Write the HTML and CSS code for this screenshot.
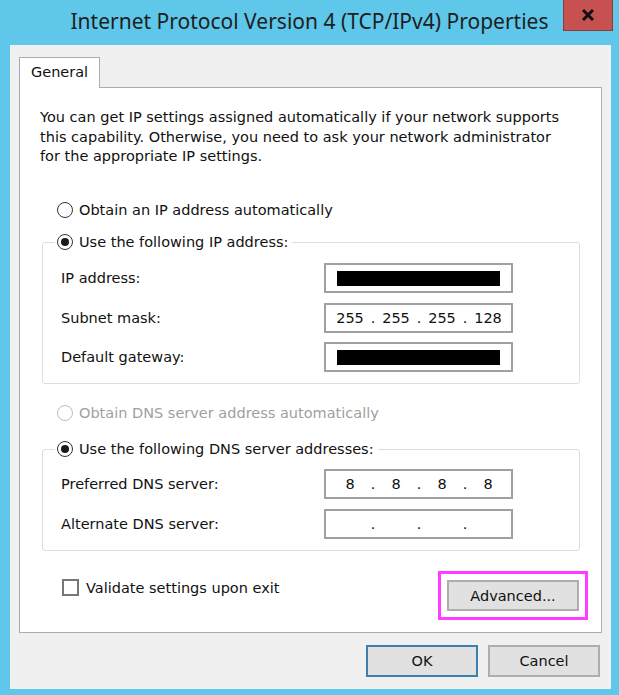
FILE: index.html
```html
<!DOCTYPE html>
<html lang="en">
<head>
<meta charset="utf-8">
<title>Internet Protocol Version 4 (TCP/IPv4) Properties</title>
<link rel="stylesheet" href="styles.css">
</head>
<body>
<div class="window">
  <header class="titlebar">
    <span class="spacer"></span>
    <h1 class="title">Internet Protocol Version 4 (TCP/IPv4) Properties</h1>
    <div class="close-wrap">
      <div class="close">
        <svg width="14" height="12" viewBox="0 0 14 12"><path d="M2 1 L12 11 M12 1 L2 11" stroke="#111" stroke-width="3" stroke-linecap="butt" fill="none"/></svg>
      </div>
    </div>
  </header>
  <div class="dialog">
    <div class="tabs"><div class="tab">General</div></div>
    <div class="panel">
      <p class="intro">You can get IP settings assigned automatically if your network supports<br>this capability. Otherwise, you need to ask your network administrator<br>for the appropriate IP settings.</p>

      <div class="radio-row first-radio">
        <span class="radio"></span><span>Obtain an IP address automatically</span>
      </div>

      <fieldset class="group group-ip">
        <legend class="legend"><span class="radio checked"></span><span>Use the following IP address:</span></legend>
        <div class="fields">
          <span class="label">IP address:</span>
          <div class="ipbox"><span class="redact"></span></div>
          <span class="label">Subnet mask:</span>
          <div class="ipbox">
            <span class="seg">255</span><span class="dot">.</span><span class="seg">255</span><span class="dot">.</span><span class="seg">255</span><span class="dot">.</span><span class="seg">128</span>
          </div>
          <span class="label">Default gateway:</span>
          <div class="ipbox"><span class="redact"></span></div>
        </div>
      </fieldset>

      <div class="radio-row disabled dns-auto">
        <span class="radio"></span><span>Obtain DNS server address automatically</span>
      </div>

      <fieldset class="group group-dns">
        <legend class="legend"><span class="radio checked"></span><span>Use the following DNS server addresses:</span></legend>
        <div class="fields dns-fields">
          <span class="label">Preferred DNS server:</span>
          <div class="ipbox">
            <span class="seg">8</span><span class="dot">.</span><span class="seg">8</span><span class="dot">.</span><span class="seg">8</span><span class="dot">.</span><span class="seg">8</span>
          </div>
          <span class="label">Alternate DNS server:</span>
          <div class="ipbox">
            <span class="seg"></span><span class="dot">.</span><span class="seg"></span><span class="dot">.</span><span class="seg"></span><span class="dot">.</span><span class="seg"></span>
          </div>
        </div>
      </fieldset>

      <div class="footer">
        <div class="check-row"><span class="checkbox"></span><span>Validate settings upon exit</span></div>
        <div class="highlight"><button class="btn btn-advanced">Advanced...</button></div>
      </div>
    </div>
    <div class="actions">
      <button class="btn btn-default">OK</button>
      <button class="btn">Cancel</button>
    </div>
  </div>
</div>
</body>
</html>
```

FILE: styles.css
```css
* { box-sizing: border-box; }

html, body {
  margin: 0;
  padding: 0;
}

body {
  width: 619px;
  height: 695px;
  background: #5fc7e9;
  font-family: "DejaVu Sans", sans-serif;
  font-size: 14.5px;
  color: #111;
  overflow: hidden;
}

.window {
  display: flex;
  flex-direction: column;
  height: 695px;
}

.titlebar {
  height: 45px;
  display: grid;
  grid-template-columns: 1fr auto 1fr;
  align-items: start;
}

.title {
  margin: 0;
  padding-top: 5px;
  font-family: "Noto Sans", "Open Sans", sans-serif;
  font-weight: normal;
  font-size: 21px;
  line-height: 32px;
  color: #1e1e1e;
  white-space: nowrap;
}

.close-wrap {
  display: flex;
  justify-content: flex-end;
  padding-right: 6px;
}

.close {
  width: 50px;
  height: 31px;
  background: #c75050;
  border: 1px solid #8c3a3a;
  border-top: none;
  display: flex;
  align-items: center;
  justify-content: center;
}

.dialog {
  margin: 0 8px 0 10px;
  height: 644px;
  background: #f0f0f0;
  padding: 12px 9px 0 9px;
  display: flex;
  flex-direction: column;
}

.tabs {
  display: flex;
  height: 30px;
}

.tab {
  position: relative;
  z-index: 1;
  width: 81px;
  height: 31px;
  background: #fff;
  border: 1px solid #adadad;
  border-bottom: none;
  padding-left: 11px;
  line-height: 28px;
}

.panel {
  background: #fff;
  border: 1px solid #adadad;
  height: 546px;
  padding: 20px 13px 12px 20px;
  display: flex;
  flex-direction: column;
}

.intro {
  margin: 0;
  line-height: 19.5px;
  white-space: nowrap;
}

.radio-row {
  display: flex;
  align-items: center;
  gap: 6px;
  height: 20px;
  padding-left: 17px;
}

.first-radio { margin-top: 33.5px; }
.dns-auto { margin-top: 19px; }

.disabled { color: #9f9f9f; }
.disabled .radio { border-color: #bdbdbd; }

.radio {
  width: 16px;
  height: 16px;
  border: 1.5px solid #333;
  border-radius: 50%;
  background: #fff;
  display: inline-flex;
  align-items: center;
  justify-content: center;
  flex: none;
}

.radio.checked::after {
  content: "";
  width: 8px;
  height: 8px;
  border-radius: 50%;
  background: #1a1a1a;
}

.group {
  margin: 12px 8px 0 2px;
  padding: 11px 18px 11px 18px;
  border: 1px solid #d5dfe6;
  border-radius: 3px;
  min-width: 0;
}

.group-dns {
  margin-top: 16px;
  padding-top: 10px;
}

.legend {
  display: flex;
  align-items: center;
  gap: 6px;
  height: 20px;
  padding: 0 4px 0 2px;
  margin-left: -6px;
}

.fields {
  display: grid;
  grid-template-columns: 263px 189px;
  grid-auto-rows: 30px;
  row-gap: 9.5px;
  align-items: center;
}

.dns-fields { row-gap: 10px; }

.label { white-space: nowrap; }

.ipbox {
  height: 30px;
  border: 2px solid #a0a0a0;
  background: #fff;
  display: flex;
  align-items: center;
  padding-left: 9px;
}

.redact {
  width: 163px;
  height: 15px;
  margin-left: 2px;
  background: #000;
}

.seg {
  width: 30px;
  text-align: center;
}

.dot {
  width: 16px;
  text-align: center;
}

.footer {
  margin-top: 20px;
  display: flex;
  justify-content: space-between;
  align-items: flex-start;
}

.check-row {
  display: flex;
  align-items: center;
  gap: 7px;
  height: 20px;
  margin-top: 6.5px;
  padding-left: 22px;
}

.checkbox {
  width: 17px;
  height: 17px;
  border: 2px solid #777;
  background: #fff;
  flex: none;
}

.highlight {
  width: 150px;
  height: 49px;
  border: 3px solid #ff3cff;
  padding: 6px;
}

.btn {
  font-family: "DejaVu Sans", sans-serif;
  font-size: 14.5px;
  color: #111;
  background: #e1e1e1;
  border: 2px solid #adadad;
  margin: 0;
  padding: 0;
}

.btn-advanced {
  width: 132px;
  height: 31px;
}

.actions {
  display: flex;
  justify-content: flex-end;
  gap: 10px;
  margin-top: 12px;
  padding-right: 2px;
}

.actions .btn {
  width: 112px;
  height: 32px;
}

.btn-default {
  border-color: #3c7fb1;
}
```
